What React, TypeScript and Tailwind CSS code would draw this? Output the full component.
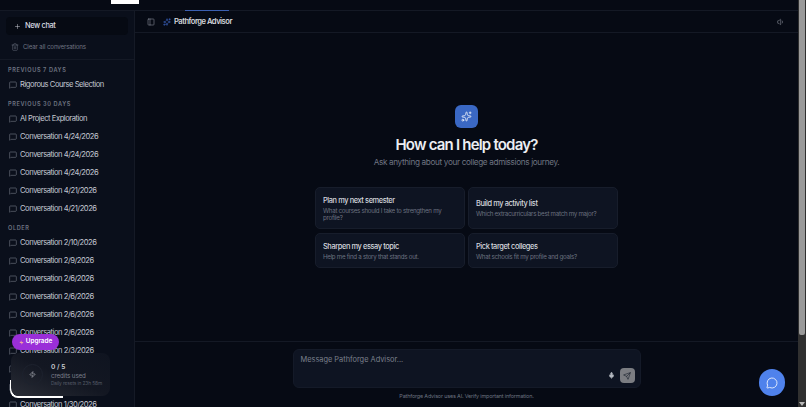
import { Plus, Trash2, MessageSquare, PanelLeft, Sparkles, Volume1, Mic, Send, MessageCircle, Zap } from "lucide-react";

function Row({ label }: { label: string }) {
  return (
    <div className="flex items-center h-[18px] shrink-0 pl-[9px] gap-[3px] text-[7.6px] tracking-[-0.45px] text-[#c4c8d2] whitespace-nowrap">
      <MessageSquare size={8} strokeWidth={1.5} className="text-[#8b909c] shrink-0" />
      <span>{label}</span>
    </div>
  );
}

function Section({ title }: { title: string }) {
  return <div className="pl-[8px] text-[5.6px] font-semibold tracking-[0.6px] text-[#6f7582] uppercase h-[10px] leading-[9px] shrink-0">{title}</div>;
}

function Card({ title, sub }: { title: string; sub: string }) {
  return (
    <div className="flex flex-col justify-center px-[7px] pt-[1px] rounded-[5px] bg-[#0e1422] border border-[#171d2b] min-h-0">
      <div className="text-[7.4px] font-medium tracking-[-0.4px] text-[#d5d8de] leading-[10px]">{title}</div>
      <div className="text-[6.2px] tracking-[-0.28px] text-[#6c7280] leading-[7.5px] mt-[1px]">{sub}</div>
    </div>
  );
}

export default function App() {
  return (
    <div className="w-[806px] h-[407px] overflow-hidden flex bg-[#060a14] font-['Inter',sans-serif] relative">
      <div className="flex-1 min-w-0 flex flex-col">
        <div className="h-[11px] shrink-0 border-b border-[#141925] flex relative">
          <div className="ml-[111px] w-[28px] h-[4px] bg-white" />
          <div className="ml-[46px] w-[44px] h-[11px] border-b border-[#3b5fb0]" />
        </div>
        <div className="flex-1 min-h-0 flex">
          <aside className="w-[135px] shrink-0 bg-[#0a0f1b] border-r border-[#151a26] flex flex-col overflow-hidden">
            <div className="px-[6px] pt-[6px]">
              <div className="h-[18px] rounded-[4px] bg-[#060a13] flex items-center pl-[8px] gap-[4px] text-[7.4px] tracking-[-0.35px] font-medium text-[#d8dbe2]">
                <Plus size={7} strokeWidth={1.6} />
                New chat
              </div>
            </div>
            <div className="h-[25px] flex items-center pl-[11px] gap-[4px] text-[6.2px] tracking-[-0.15px] text-[#6f7582] border-b border-[#141925] shrink-0">
              <Trash2 size={8} strokeWidth={1.5} />
              Clear all conversations
            </div>
            <div className="pt-[6px]"><Section title="Previous 7 days" /></div>
            <Row label="Rigorous Course Selection" />
            <div className="mt-[6px]"><Section title="Previous 30 days" /></div>
            <Row label="AI Project Exploration" />
            <Row label="Conversation 4/24/2026" />
            <Row label="Conversation 4/24/2026" />
            <Row label="Conversation 4/24/2026" />
            <Row label="Conversation 4/21/2026" />
            <Row label="Conversation 4/21/2026" />
            <div className="mt-[6px]"><Section title="Older" /></div>
            <Row label="Conversation 2/10/2026" />
            <Row label="Conversation 2/9/2026" />
            <Row label="Conversation 2/6/2026" />
            <Row label="Conversation 2/6/2026" />
            <Row label="Conversation 2/6/2026" />
            <Row label="Conversation 2/6/2026" />
            <Row label="Conversation 2/3/2026" />
            <Row label="Conversation 1/30/2026" />
            <Row label="Conversation 1/30/2026" />
            <Row label="Conversation 1/30/2026" />
          </aside>
          <main className="flex-1 min-w-0 flex flex-col">
            <header className="h-[22px] shrink-0 border-b border-[#141925] flex items-center pl-[12px] pr-[13px] text-[#d5d8de]">
              <PanelLeft size={8} strokeWidth={1.5} className="text-[#9ca1ad]" />
              <Sparkles size={8} strokeWidth={1.8} className="text-[#3f68c8] ml-[8px]" />
              <span className="ml-[3px] text-[7.6px] tracking-[-0.5px] font-semibold">Pathforge Advisor</span>
              <Volume1 size={8} strokeWidth={1.5} className="ml-auto text-[#9ca1ad]" />
            </header>
            <div className="flex-1 min-h-0 flex flex-col items-center">
              <div className="mt-[72px] w-[23px] h-[23px] rounded-[6px] bg-[#3a68c4] flex items-center justify-center text-white shrink-0">
                <Sparkles size={11} strokeWidth={1.6} />
              </div>
              <div className="mt-[6px] text-[15px] font-semibold text-[#eceef2] leading-[22px] tracking-[-0.8px]">How can I help today?</div>
              <div className="text-[8.2px] tracking-[-0.35px] text-[#6f7582] leading-[13px]">Ask anything about your college admissions journey.</div>
              <div className="mt-[18px] w-[303px] grid grid-cols-2 gap-x-[3px] gap-y-[4px] [grid-template-rows:42px_35px]">
                <Card title="Plan my next semester" sub="What courses should I take to strengthen my profile?" />
                <Card title="Build my activity list" sub="Which extracurriculars best match my major?" />
                <Card title="Sharpen my essay topic" sub="Help me find a story that stands out." />
                <Card title="Pick target colleges" sub="What schools fit my profile and goals?" />
              </div>
            </div>
            <div className="h-[66px] shrink-0 border-t border-[#141925] flex flex-col items-center pt-[7px]">
              <div className="w-[348px] h-[39px] rounded-[6px] bg-[#0e1422] border border-[#141a28] relative px-[7px] pt-[4px] text-[7.4px] text-[#7b808c]">
                Message Pathforge Advisor...
                <Mic size={7} strokeWidth={2} className="absolute right-[25px] bottom-[8px] text-[#b4b8c0]" fill="#b4b8c0" />
                <div className="absolute right-[5px] bottom-[4px] w-[15px] h-[15px] rounded-[4px] bg-[#7b7d82] flex items-center justify-center text-[#0e1422]">
                  <Send size={8} strokeWidth={1.6} />
                </div>
              </div>
              <div className="mt-[4px] text-[5.4px] tracking-[-0.14px] text-[#6c7280]">Pathforge Advisor uses AI. Verify important information.</div>
            </div>
          </main>
        </div>
      </div>
      <div className="w-[8px] shrink-0 bg-[#303030] flex flex-col items-center">
        <div className="w-[6px] h-[335px] rounded-b-[2px] bg-[#9a9a9a]" />
        <div className="mt-auto mb-[1px] w-0 h-0 border-l-[3px] border-r-[3px] border-t-[4px] border-l-transparent border-r-transparent border-t-[#b8b8b8]" />
      </div>

      <div className="absolute left-[12px] top-[334px] h-[16px] w-[47px] rounded-full bg-[#9a2fd8] flex items-center justify-center gap-[2px] text-[6.4px] font-semibold text-white z-20">
        <Zap size={5} fill="#f0a0a0" strokeWidth={0} />
        Upgrade
      </div>
      <div className="absolute left-[10px] top-[380px] w-[53px] h-[18px] rounded-bl-[8px] border-l-2 border-b-2 border-white bg-[#0a0f1b] z-0" />
      <div className="absolute left-[11px] top-[353px] w-[99px] h-[43px] rounded-[8px] bg-gradient-to-tr from-[#2a2d36] via-[#131722] to-[#0f1420] flex items-center z-10">
        <div className="ml-[11px] w-[21px] h-[21px] rounded-full border border-[#1d222e] flex items-center justify-center text-[#c9ccd2]">
          <Zap size={7} strokeWidth={1.8} />
        </div>
        <div className="ml-[8px] flex flex-col">
          <span className="text-[6.6px] font-semibold text-[#c9ccd2] leading-[9px]">0 / 5</span>
          <span className="text-[6.2px] tracking-[-0.1px] text-[#7b808c] leading-[8px]">credits used</span>
          <span className="text-[4.8px] tracking-[-0.1px] text-[#555b68] leading-[7px]">Daily resets in 23h 58m</span>
        </div>
      </div>
      <div className="absolute left-[759px] top-[369px] w-[26px] h-[27px] rounded-full bg-[#4f82ec] flex items-center justify-center text-white z-20">
        <MessageCircle size={12} strokeWidth={1.6} />
      </div>
    </div>
  );
}
